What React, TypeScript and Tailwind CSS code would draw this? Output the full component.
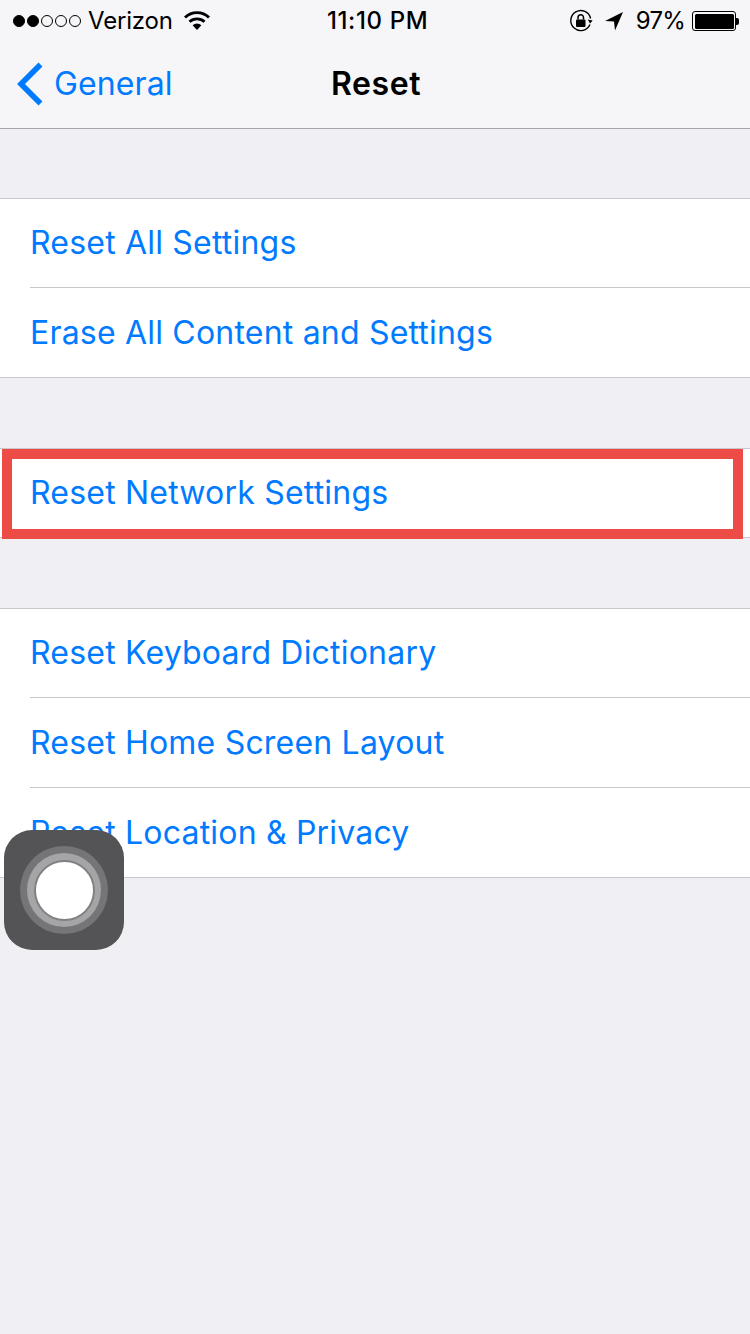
import React from 'react';

const FONT = "font-['Inter','Liberation_Sans',sans-serif]";

const GROUPS = [
  ['Reset All Settings', 'Erase All Content and Settings'],
  ['Reset Network Settings'],
  ['Reset Keyboard Dictionary', 'Reset Home Screen Layout', 'Reset Location & Privacy'],
];

function Dots() {
  return (
    <div className="flex items-center gap-[2px]">
      {[0, 1, 2, 3, 4].map((i) => (
        <div
          key={i}
          className={i < 2 ? 'h-[12px] w-[12px] rounded-full border border-black bg-black' : 'h-[12px] w-[12px] rounded-full border border-black'}
        />
      ))}
    </div>
  );
}

function Wifi() {
  return (
    <svg width="26" height="20" viewBox="0 0 26 20" className="ml-[11px]">
      <path d="M1 6.5 A17 17 0 0 1 25 6.5" fill="none" stroke="#000" strokeWidth="2.8" />
      <path d="M5.5 10.8 A11 11 0 0 1 20.5 10.8" fill="none" stroke="#000" strokeWidth="2.8" />
      <path d="M8.6 14.2 A6.5 6.5 0 0 1 17.4 14.2 L13 19 Z" fill="#000" />
    </svg>
  );
}

function RotationLock() {
  return (
    <svg width="24" height="24" viewBox="0 0 24 24">
      <path d="M21 15.5 A10 10 0 1 1 21.6 9.5" fill="none" stroke="#000" strokeWidth="1.4" />
      <path d="M18.5 11 L23.5 11 L21.5 14.5 Z" fill="#000" transform="rotate(10 21 12)" />
      <rect x="7" y="10.5" width="9.5" height="7.5" rx="1" fill="#000" />
      <path d="M9 10.5 V8.5 A2.7 2.7 0 0 1 14.5 8.5 V10.5" fill="none" stroke="#000" strokeWidth="1.5" />
    </svg>
  );
}

function LocationArrow() {
  return (
    <svg width="20" height="20" viewBox="0 0 20 20" className="ml-[11px]">
      <path d="M19 1 L1 10 L10 10.5 L11 19.5 Z" fill="#000" />
    </svg>
  );
}

function Battery() {
  return (
    <div className="ml-[7px] flex items-center">
      <div className="flex h-[20px] w-[44px] rounded-[3px] border border-black p-[1.5px]">
        <div className="h-full w-full rounded-[1.5px] bg-black" />
      </div>
      <div className="h-[7px] w-[3px] rounded-r-[2px] bg-black" />
    </div>
  );
}

function Row({ label, first, last }: { label: string; first: boolean; last: boolean }) {
  let cls = 'flex h-[90px] items-center border-b border-[#c8c7cc]';
  if (first && last) cls = 'flex h-[88px] items-center';
  else if (first) cls = 'flex h-[89px] items-center border-b border-[#c8c7cc]';
  else if (last) cls = 'flex h-[89px] items-center';
  return (
    <div className="pl-[30px]">
      <div className={cls}>
        <span className="text-[32px] tracking-[0.2px] text-[#007aff]">{label}</span>
      </div>
    </div>
  );
}

export default function App() {
  return (
    <div className={`relative h-[1334px] w-[750px] overflow-hidden bg-[#efeff4] ${FONT}`}>
      <header className="h-[129px] border-b border-[#a7a7aa] bg-[#f6f6f8]">
        <div className="flex h-[40px] items-center pl-[13px] pr-[11px] pt-[2px] text-[24px] tracking-[-0.2px] text-black">
          <div className="flex w-[314px] items-center">
            <Dots />
            <span className="ml-[7px]">Verizon</span>
            <Wifi />
          </div>
          <span className="font-medium tracking-[0.6px]">11:10 PM</span>
          <div className="flex flex-1 items-center justify-end">
            <RotationLock />
            <LocationArrow />
            <span className="ml-[12px] tracking-[-0.8px]">97%</span>
            <Battery />
          </div>
        </div>
        <div className="relative flex h-[88px] items-center justify-center">
          <div className="absolute left-[16px] top-[3px] flex h-[82px] items-center">
            <svg width="27" height="44" viewBox="0 0 27 44">
              <path d="M24.5 2.5 L5 22 L24.5 41.5" fill="none" stroke="#007aff" strokeWidth="5.6" />
            </svg>
            <span className="ml-[11px] text-[32px] tracking-[0.1px] text-[#007aff]">General</span>
          </div>
          <span className="pb-[1px] pl-[2px] text-[32px] font-semibold tracking-[0.6px] text-black">Reset</span>
        </div>
      </header>

      <main className="flex flex-col gap-[70px] pt-[69px]">
        {GROUPS.map((rows) => (
          <section key={rows[0]} className="border-y border-[#c8c7cc] bg-white">
            {rows.map((label, i) => (
              <Row key={label} label={label} first={i === 0} last={i === rows.length - 1} />
            ))}
          </section>
        ))}
      </main>

      {/* annotation around the network row */}
      <div className="absolute left-[2px] top-[449px] h-[90px] w-[741px] border-[10px] border-[#ec4c45]" />

      {/* assistive touch button */}
      <div className="absolute left-[4px] top-[830px] flex h-[120px] w-[120px] items-center justify-center rounded-[28px] bg-[#545457]">
        <div className="flex h-[88px] w-[88px] items-center justify-center rounded-full bg-[#757577]">
          <div className="flex h-[74px] w-[74px] items-center justify-center rounded-full bg-[#a5a5a7]">
            <div className="h-[61px] w-[61px] rounded-full border-[2px] border-[#808083] bg-white" />
          </div>
        </div>
      </div>
    </div>
  );
}
